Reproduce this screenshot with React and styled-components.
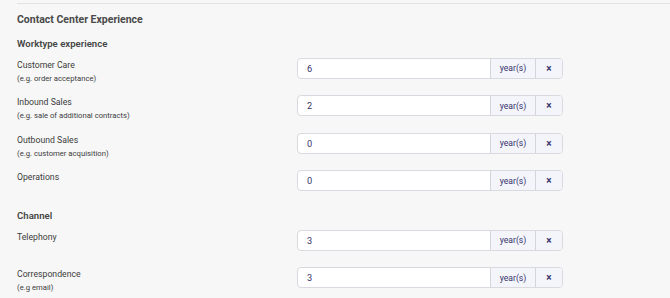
import React from "react";
import styled, { createGlobalStyle } from "styled-components";

const Global = createGlobalStyle`
  html, body { margin: 0; padding: 0; background: #f7f7f7; }
  body { font-family: Roboto, "Liberation Sans", Arial, sans-serif; color: #3a3a3a; }
`;

const Page = styled.div`
  width: 670px;
  height: 298px;
  overflow: hidden;
  background: #f7f7f7;
  padding: 2.5px 0 0 17px;
  box-sizing: border-box;
`;

const Divider = styled.div`
  height: 1px;
  background: #e2e2e2;
  margin-bottom: 8px;
`;

const Title = styled.h2`
  margin: 0;
  font-size: 10.5px;
  font-weight: 700;
  line-height: 15px;
  color: #4a4a4a;
`;

const SectionTitle = styled.h3`
  margin: ${(p) => p.$mt}px 0 0;
  font-size: 9.6px;
  font-weight: 600;
  line-height: 14px;
  height: 21px;
  color: #454545;
`;

const Row = styled.div`
  display: grid;
  grid-template-columns: 280px 266px;
  height: 37.6px;
  align-items: start;
`;

const LabelCol = styled.div`
  padding-top: 1px;
`;

const Label = styled.div`
  font-size: 8.7px;
  line-height: 12px;
  color: #3c3c3c;
`;

const Hint = styled.div`
  font-size: 7.7px;
  line-height: 11px;
  margin-top: 2px;
  color: #3c3c3c;
`;

const Group = styled.div`
  display: flex;
  height: 21px;
  box-sizing: border-box;
  border: 1px solid #d9d9df;
  border-radius: 4px;
  background: #fff;
  overflow: hidden;
`;

const Value = styled.div`
  flex: 1;
  display: flex;
  align-items: center;
  padding-left: 9px;
  font-size: 9.2px;
  color: #35336a;
`;

const Addon = styled.div`
  width: ${(p) => p.$w}px;
  display: flex;
  align-items: center;
  justify-content: center;
  background: #f4f4fb;
  border-left: 1px solid #d4d4da;
  font-size: ${(p) => p.$fs}px;
  font-weight: ${(p) => p.$fw || 400};
  color: #35336a;
`;

const rowsA = [
  { label: "Customer Care", hint: "(e.g. order acceptance)", value: "6" },
  { label: "Inbound Sales", hint: "(e.g. sale of additional contracts)", value: "2" },
  { label: "Outbound Sales", hint: "(e.g. customer acquisition)", value: "0" },
  { label: "Operations", value: "0" },
];

const rowsB = [
  { label: "Telephony", value: "3" },
  { label: "Correspondence", hint: "(e.g email)", value: "3" },
];

function FieldRow({ label, hint, value }) {
  return (
    <Row>
      <LabelCol>
        <Label>{label}</Label>
        {hint && <Hint>{hint}</Hint>}
      </LabelCol>
      <Group>
        <Value>{value}</Value>
        <Addon $w={44} $fs={8.6}>year(s)</Addon>
        <Addon $w={26} $fs={10} $fw={700}>×</Addon>
      </Group>
    </Row>
  );
}

export default function App() {
  return (
    <Page>
      <Global />
      <Divider />
      <Title>Contact Center Experience</Title>
      <SectionTitle $mt={10}>Worktype experience</SectionTitle>
      {rowsA.map((r) => (
        <FieldRow key={r.label} {...r} />
      ))}
      <SectionTitle $mt={1}>Channel</SectionTitle>
      {rowsB.map((r) => (
        <FieldRow key={r.label} {...r} />
      ))}
    </Page>
  );
}
